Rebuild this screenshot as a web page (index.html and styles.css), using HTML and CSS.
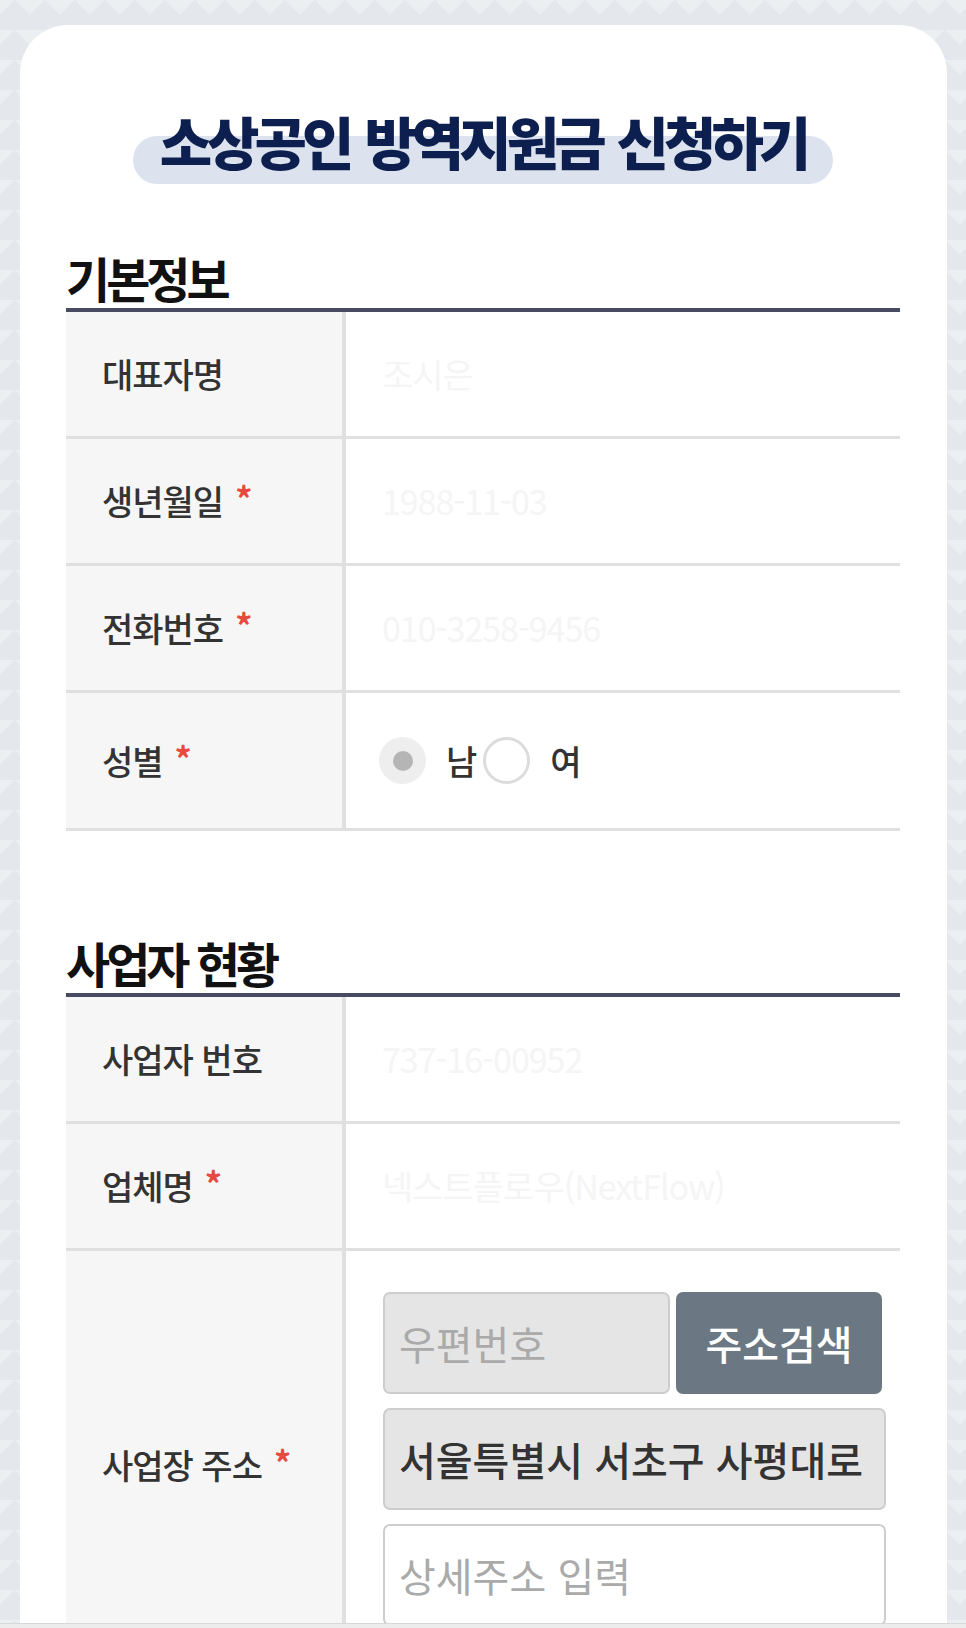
FILE: index.html
```html
<!DOCTYPE html>
<html lang="ko">
<head>
<meta charset="utf-8">
<title>소상공인 방역지원금 신청하기</title>
<link rel="stylesheet" href="styles.css">
</head>
<body>
<div class="page">
  <main class="card">
    <h1 class="title"><span class="title-text">소상공인 방역지원금 신청하기</span></h1>

    <section class="section">
      <h2 class="section-title">기본정보</h2>
      <div class="table">
        <div class="row">
          <div class="th">대표자명</div>
          <div class="td"><span class="value">조시은</span></div>
        </div>
        <div class="row">
          <div class="th">생년월일<span class="req">*</span></div>
          <div class="td"><span class="value">1988-11-03</span></div>
        </div>
        <div class="row">
          <div class="th">전화번호<span class="req">*</span></div>
          <div class="td"><span class="value">010-3258-9456</span></div>
        </div>
        <div class="row">
          <div class="th">성별<span class="req">*</span></div>
          <div class="td radios">
            <label class="radio"><span class="dot checked"></span>남</label>
            <label class="radio"><span class="dot"></span>여</label>
          </div>
        </div>
      </div>
    </section>

    <section class="section second">
      <h2 class="section-title">사업자 현황</h2>
      <div class="table">
        <div class="row">
          <div class="th">사업자 번호</div>
          <div class="td"><span class="value">737-16-00952</span></div>
        </div>
        <div class="row">
          <div class="th">업체명<span class="req">*</span></div>
          <div class="td"><span class="value">넥스트플로우(NextFlow)</span></div>
        </div>
        <div class="row">
          <div class="th">사업장 주소<span class="req">*</span></div>
          <div class="td address">
            <div class="zip-row">
              <div class="box readonly placeholder zip">우편번호</div>
              <div class="btn">주소검색</div>
            </div>
            <div class="box readonly">서울특별시 서초구 사평대로</div>
            <div class="box placeholder">상세주소 입력</div>
          </div>
        </div>
      </div>
    </section>
  </main>
</div>
<div class="bottom-bar"></div>
</body>
</html>
```

FILE: styles.css
```css
* { box-sizing: border-box; }

html, body {
  margin: 0;
  padding: 0;
}

body {
  font-family: "Noto Sans CJK KR", "Noto Sans", sans-serif;
  color: #333;
  background-color: #e4e8ec;
  background-image:
    linear-gradient(135deg, #eceff2 25%, transparent 25%),
    linear-gradient(225deg, #eceff2 25%, transparent 25%);
  background-size: 30px 30px;
  background-position: 0 0, 0 0;
}

.page {
  padding: 25px 19px 0 20px;
}

.card {
  background: #fff;
  border-radius: 48px 48px 0 0;
  padding: 78px 47px 80px 46px;
  min-height: 1700px;
}

.title {
  margin: 0;
  text-align: center;
  line-height: 74px;
  font-size: 57px;
  font-weight: 900;
  color: #0c1f4e;
}

.title-text {
  position: relative;
  z-index: 0;
  display: inline-block;
  letter-spacing: -5px;
  word-spacing: 4px;
  padding: 0 27px;
}

.title-text::before {
  content: "";
  position: absolute;
  left: 0;
  right: 0;
  bottom: -7px;
  height: 48px;
  border-radius: 24px;
  background: #dce3ef;
  z-index: -1;
}

.section {
  margin-top: 72px;
}

.section.second {
  margin-top: 103px;
}

.section-title {
  margin: 0;
  font-size: 48px;
  line-height: 56px;
  font-weight: 700;
  letter-spacing: -4px;
  color: #111;
  padding-bottom: 3px;
  border-bottom: 4px solid #494b62;
}

.table {
  display: flex;
  flex-direction: column;
}

.row {
  display: flex;
  border-bottom: 3px solid #e0e0e0;
}

.th {
  width: 280px;
  flex: none;
  background: #f6f6f6;
  border-right: 4px solid #e0e0e0;
  padding: 44px 0 44px 36px;
  font-size: 34px;
  line-height: 36px;
  font-weight: 500;
  letter-spacing: -1px;
  color: #333;
  display: flex;
  align-items: center;
}

.req {
  color: #e8493f;
  font-size: 34px;
  line-height: 36px;
  font-weight: 700;
  margin-left: 12px;
  margin-top: -6px;
}

.td {
  flex: 1;
  padding: 44px 0 44px 36px;
  display: flex;
  align-items: center;
}

.value {
  font-size: 34px;
  line-height: 36px;
  color: #f5f5f5;
  letter-spacing: -1px;
}

.radios {
  padding: 44px 0 44px 33px;
  gap: 6px;
}

.radio {
  display: flex;
  align-items: center;
  gap: 20px;
  font-size: 34px;
  line-height: 36px;
  font-weight: 500;
  color: #333;
}

.dot {
  width: 47px;
  height: 47px;
  border-radius: 50%;
  border: 3px solid #dcdcdc;
  background: #fff;
  display: flex;
  align-items: center;
  justify-content: center;
}

.dot.checked {
  border: none;
  background: #eeeeee;
}

.dot.checked::after {
  content: "";
  width: 20px;
  height: 20px;
  border-radius: 50%;
  background: #b5b5b5;
}

.address {
  flex-direction: column;
  align-items: flex-start;
  padding: 41px 14px 52px 37px;
  gap: 14px;
}

.zip-row {
  display: flex;
  gap: 6px;
  width: 499px;
}

.box {
  width: 503px;
  height: 102px;
  border: 2px solid #cdcdcd;
  border-radius: 7px;
  background: #fff;
  padding: 0 0 0 14px;
  display: flex;
  align-items: center;
  font-size: 40px;
  letter-spacing: 0;
  color: #333;
  font-weight: 500;
  white-space: nowrap;
}

.box.readonly {
  background: #e5e5e5;
}

.box.placeholder {
  color: #aaa;
  font-weight: 400;
}

.box.zip {
  width: auto;
  flex: 1;
}

.btn {
  width: 206px;
  height: 102px;
  border-radius: 7px;
  background: #6b7782;
  color: #fff;
  font-size: 40px;
  font-weight: 500;
  letter-spacing: 0;
  display: flex;
  align-items: center;
  justify-content: center;
}

.bottom-bar {
  position: fixed;
  left: 0;
  right: 0;
  bottom: 0;
  height: 5px;
  background: #ececec;
  border-top: 1px solid #d8d8d8;
}
```
